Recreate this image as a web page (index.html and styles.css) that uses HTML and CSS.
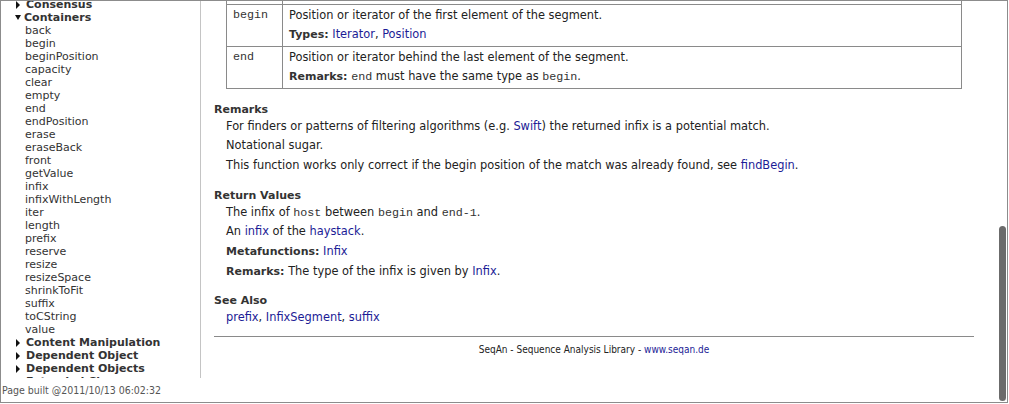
FILE: index.html
```html
<!DOCTYPE html>
<html>
<head>
<meta charset="utf-8">
<link rel="stylesheet" href="styles.css">
</head>
<body>
<div class="window">
  <aside class="side">
    <nav class="nav">
      <div class="tree">
        <div class="group closed"><span class="tri"></span>Consensus</div>
        <div class="group open"><span class="tri"></span>Containers</div>
        <div class="item">back</div>
        <div class="item">begin</div>
        <div class="item">beginPosition</div>
        <div class="item">capacity</div>
        <div class="item">clear</div>
        <div class="item">empty</div>
        <div class="item">end</div>
        <div class="item">endPosition</div>
        <div class="item">erase</div>
        <div class="item">eraseBack</div>
        <div class="item">front</div>
        <div class="item">getValue</div>
        <div class="item">infix</div>
        <div class="item">infixWithLength</div>
        <div class="item">iter</div>
        <div class="item">length</div>
        <div class="item">prefix</div>
        <div class="item">reserve</div>
        <div class="item">resize</div>
        <div class="item">resizeSpace</div>
        <div class="item">shrinkToFit</div>
        <div class="item">suffix</div>
        <div class="item">toCString</div>
        <div class="item">value</div>
        <div class="group closed"><span class="tri"></span>Content Manipulation</div>
        <div class="group closed"><span class="tri"></span>Dependent Object</div>
        <div class="group closed"><span class="tri"></span>Dependent Objects</div>
        <div class="group closed"><span class="tri"></span>Extended Class</div>
      </div>
    </nav>
    <div class="built">Page built @2011/10/13 06:02:32</div>
  </aside>
  <main class="main">
    <table class="params">
      <tr class="tail"><td class="pname"></td><td class="pdesc"></td></tr>
      <tr>
        <td class="pname"><code>begin</code></td>
        <td class="pdesc">
          <p>Position or iterator of the first element of the segment.</p>
          <p><b>Types:</b> <a>Iterator</a>, <a>Position</a></p>
        </td>
      </tr>
      <tr>
        <td class="pname"><code>end</code></td>
        <td class="pdesc">
          <p>Position or iterator behind the last element of the segment.</p>
          <p><b>Remarks:</b> <code>end</code> must have the same type as <code>begin</code>.</p>
        </td>
      </tr>
    </table>

    <section class="sec">
      <h3>Remarks</h3>
      <div class="sec-body">
        <p>For finders or patterns of filtering algorithms (e.g. <a>Swift</a>) the returned infix is a potential match.</p>
        <p>Notational sugar.</p>
        <p>This function works only correct if the begin position of the match was already found, see <a>findBegin</a>.</p>
      </div>
    </section>

    <section class="sec">
      <h3>Return Values</h3>
      <div class="sec-body">
        <p>The infix of <code>host</code> between <code>begin</code> and <code>end-1</code>.</p>
        <p>An <a>infix</a> of the <a>haystack</a>.</p>
        <p><b>Metafunctions:</b> <a>Infix</a></p>
        <p><b>Remarks:</b> The type of the infix is given by <a>Infix</a>.</p>
      </div>
    </section>

    <section class="sec">
      <h3>See Also</h3>
      <div class="sec-body">
        <p><a>prefix</a>, <a>InfixSegment</a>, <a>suffix</a></p>
      </div>
    </section>

    <footer class="foot">SeqAn - Sequence Analysis Library - <a>www.seqan.de</a></footer>

    <div class="scrollbar"></div>
  </main>
</div>
</body>
</html>
```

FILE: styles.css
```css
html, body {
  margin: 0;
  padding: 0;
  background: #fff;
}

.window {
  box-sizing: border-box;
  width: 1008px;
  height: 403px;
  border: 1px solid #8c8c8c;
  display: grid;
  grid-template-columns: 200px 1fr;
  overflow: hidden;
  font-family: "DejaVu Sans", Verdana, sans-serif;
  color: #222;
}

/* ---------- sidebar ---------- */
.side {
  display: flex;
  flex-direction: column;
  min-height: 0;
}

.nav {
  box-sizing: border-box;
  height: 377px;
  border-right: 1px solid #c4c4c4;
  overflow: hidden;
}

.tree {
  margin-top: -3px;
  font-size: 11px;
  line-height: 13px;
  color: #333;
}

.item {
  padding-left: 24px;
  white-space: nowrap;
}

.group {
  display: flex;
  align-items: center;
  font-weight: bold;
  white-space: nowrap;
}

.tri {
  width: 0;
  height: 0;
}

.group.closed .tri {
  margin-left: 15px;
  margin-right: 6px;
  border-left: 4px solid #111;
  border-top: 4px solid transparent;
  border-bottom: 4px solid transparent;
}

.group.open .tri {
  margin-left: 14px;
  margin-right: 3px;
  border-top: 5px solid #111;
  border-left: 3.5px solid transparent;
  border-right: 3.5px solid transparent;
}

.built {
  padding: 6px 0 0 1px;
  font-family: "DejaVu Sans Condensed", "DejaVu Sans", sans-serif;
  font-size: 10.5px;
  line-height: 13px;
  color: #555;
  white-space: nowrap;
}

/* ---------- main ---------- */
.main {
  position: relative;
  overflow: hidden;
  padding: 0 33px 0 13px;
  font-size: 11.4px;
}

a {
  color: #1c1c96;
  text-decoration: none;
}

b {
  color: #333;
  font-size: 11px;
}

code {
  font-family: "Liberation Mono", "Courier New", monospace;
  font-size: 11.7px;
  line-height: 1;
  color: #333;
}

p {
  margin: 0 0 4.5px;
  line-height: 15px;
}

.params {
  width: calc(100% - 24px);
  margin: 0 12px;
  border-collapse: separate;
  border-spacing: 0;
}

.params td {
  vertical-align: top;
  border-right: 1px solid #8a8a8a;
  border-bottom: 1px solid #8a8a8a;
  padding: 3px 6px 4px 6px;
}

.params td.pname {
  width: 43px;
  border-left: 1px solid #8a8a8a;
}

.params td.pname code {
  display: block;
  font-size: 11.7px;
  line-height: 15px;
}

.params .tail td {
  height: 3px;
  padding: 0;
}

.params .pdesc p {
  margin: 0 0 4px;
}

.params .pdesc p:last-child {
  margin-bottom: 0;
}

.sec {
  margin-top: 12.5px;
}

.sec + .sec {
  margin-top: 14.5px;
}

.sec h3 {
  margin: 0 0 2px;
  font-size: 11px;
  line-height: 15px;
  color: #333;
}

.sec-body {
  padding-left: 12px;
}

.sec-body p {
  margin-bottom: 4.8px;
}

.foot {
  margin-top: 11px;
  border-top: 1px solid #8a8a8a;
  padding-top: 6px;
  text-align: center;
  font-family: "DejaVu Sans Condensed", "DejaVu Sans", sans-serif;
  font-size: 10px;
  line-height: 13px;
  color: #222;
}

.scrollbar {
  position: absolute;
  right: 1px;
  top: 225px;
  width: 7px;
  height: 175px;
  border-radius: 4px;
  background: #6b6b6b;
}
```
